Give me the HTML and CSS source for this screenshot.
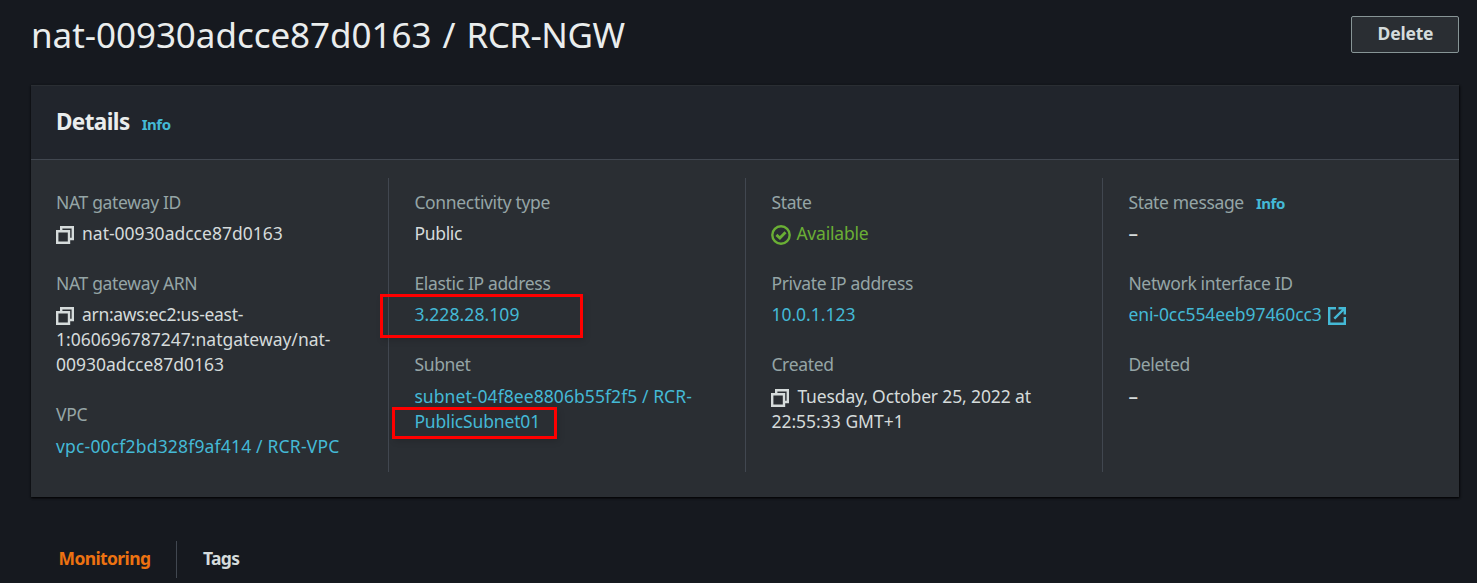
FILE: index.html
```
<!DOCTYPE html>
<html lang="en">
<head>
<meta charset="utf-8">
<title>NAT gateway details</title>
<link rel="stylesheet" href="styles.css">
</head>
<body>
<svg class="defs" aria-hidden="true">
  <symbol id="copy" viewBox="0 0 18 18"><path d="M1.2 5.2H13V16.8H1.2zM5.2 5V1.2H16.8V13H13.2" fill="none" stroke="currentColor" stroke-width="2.4"/></symbol>
</svg>
<header class="page-header">
  <h1 class="title">nat-00930adcce87d0163 / <span class="name">RCR-NGW</span></h1>
  <button class="button">Delete</button>
</header>
<main class="card">
  <div class="card-header">
    <h2 class="card-title">Details</h2>
    <a class="info">Info</a>
  </div>
  <div class="columns">
    <section class="column">
      <div class="field">
        <div class="label">NAT gateway ID</div>
        <div class="value"><svg class="icon"><use href="#copy"/></svg>nat-00930adcce87d0163</div>
      </div>
      <div class="field">
        <div class="label">NAT gateway ARN</div>
        <div class="value"><svg class="icon"><use href="#copy"/></svg><span class="snug">arn:aws:ec2:us-east-</span><br>1:060696787247:natgateway/nat-<br>00930adcce87d0163</div>
      </div>
      <div class="field last">
        <div class="label">VPC</div>
        <div class="value link wide">vpc-00cf2bd328f9af414 / RCR-VPC</div>
      </div>
    </section>
    <section class="column">
      <div class="field">
        <div class="label">Connectivity type</div>
        <div class="value snug">Public</div>
      </div>
      <div class="field">
        <div class="label">Elastic IP address</div>
        <div class="value link"><span class="ip">3.228.28.109</span></div>
      </div>
      <div class="field last">
        <div class="label">Subnet</div>
        <div class="value link"><span class="subnet">subnet-04f8ee8806b55f2f5 / RCR-</span><br><span class="public">PublicSubnet01</span></div>
      </div>
      <div class="mark mark-ip"></div>
      <div class="mark mark-subnet"></div>
    </section>
    <section class="column">
      <div class="field">
        <div class="label">State</div>
        <div class="value ok"><svg class="icon status" viewBox="0 0 20 20"><g fill="none" stroke="currentColor" stroke-width="2.4"><circle cx="10" cy="10" r="8.7"/><path d="M5.4 9.9L8.9 13L14.5 7.3" stroke-width="2.8"/></g></svg>Available</div>
      </div>
      <div class="field">
        <div class="label">Private IP address</div>
        <div class="value link">10.0.1.123</div>
      </div>
      <div class="field last">
        <div class="label">Created</div>
        <div class="value date"><svg class="icon"><use href="#copy"/></svg>Tuesday, October 25, 2022 at<br><span class="time">22:55:33 GMT+1</span></div>
      </div>
    </section>
    <section class="column">
      <div class="field">
        <div class="label">State message<a class="info">Info</a></div>
        <div class="value"><span class="dash">–</span></div>
      </div>
      <div class="field">
        <div class="label">Network interface ID</div>
        <div class="value link eni">eni-0cc554eeb97460cc3<svg class="icon external" viewBox="0 0 18 18"><path d="M8 1.2H1.2V16.8H16.8V10M10.5 1.2H16.8V7.5M16.5 1.5L6.3 11.7" fill="none" stroke="currentColor" stroke-width="2.4"/></svg></div>
      </div>
      <div class="field last">
        <div class="label">Deleted</div>
        <div class="value"><span class="dash">–</span></div>
      </div>
    </section>
  </div>
</main>
<nav class="tabs">
  <a class="tab active">Monitoring</a>
  <a class="tab tags">Tags</a>
</nav>
</body>
</html>
```
FILE: styles.css
```
* { box-sizing: border-box; }
body {
  margin: 0;
  height: 583px;
  overflow: hidden;
  background: #16191f;
  color: #d5dbdb;
  font: 17.5px/25px "Noto Sans", "Open Sans", sans-serif;
}
.defs { display: none; }
.page-header {
  display: flex;
  justify-content: space-between;
  align-items: flex-start;
  height: 85px;
  padding: 13px 18px 0 31px;
}
.title {
  margin: 0;
  color: #eaeded;
  font-size: 35px;
  font-weight: 400;
  line-height: 44px;
  letter-spacing: -0.05px;
  word-spacing: 2px;
}
.name { letter-spacing: -0.5px; }
.button {
  width: 108px;
  height: 37px;
  margin-top: 3px;
  padding: 0 0 3px 1px;
  border: 1px solid #879596;
  border-radius: 2px;
  background: #2a2e33;
  color: #d5dbdb;
  font: 700 17.5px/25px "Noto Sans", sans-serif;
  letter-spacing: -0.2px;
}
.card {
  height: 412px;
  margin: 0 18px 0 31px;
  background: #2a2e33;
  box-shadow: 0 1px 2px rgba(0, 0, 0, 0.8), 1px 1px 2px rgba(0, 0, 0, 0.5);
}
.card-header {
  display: flex;
  align-items: baseline;
  gap: 12px;
  height: 75px;
  padding: 21px 25px 0;
  border-top: 1px solid #2a2e33;
  border-bottom: 1px solid #414750;
  background: #21252c;
}
.card-title {
  margin: 0;
  color: #eaeded;
  font-size: 22.5px;
  line-height: 30px;
  letter-spacing: -0.6px;
}
.info {
  color: #44b9d6;
  font-size: 15px;
  font-weight: 700;
  line-height: 1;
  letter-spacing: -0.45px;
}
.columns {
  display: grid;
  grid-template-columns: repeat(4, 357px);
  height: 312px;
  padding-top: 18px;
}
.column {
  position: relative;
  display: flex;
  flex-direction: column;
  gap: 25px;
  height: 294px;
  padding: 12px 0 0 25px;
  white-space: nowrap;
}
.column + .column {
  padding-left: 25.4px;
  border-left: 1px solid #414750;
}
.label {
  margin-bottom: 6px;
  color: #95a5a6;
  letter-spacing: -0.34px;
}
.last .label { margin-bottom: 7px; }
.label .info { margin-left: 12px; }
.link { color: #44b9d6; }
.ok { color: #6aaf35; letter-spacing: -0.2px; }
.snug { letter-spacing: -0.3px; }
.public { letter-spacing: -0.15px; }
.subnet { letter-spacing: 0.07px; }
.wide { letter-spacing: 0.18px; }
.date { letter-spacing: -0.14px; }
.time { letter-spacing: 0; }
.eni { letter-spacing: -0.08px; }
.ip { letter-spacing: 0.08px; }
.dash { font-size: 19px; line-height: 1; font-weight: 500; }
.icon {
  width: 18px;
  height: 18px;
  margin-right: 8px;
  vertical-align: -4px;
}
.status {
  width: 20px;
  height: 20px;
  margin-right: 5px;
  vertical-align: -5px;
}
.external { margin: 0 0 0 6px; }
.mark {
  position: absolute;
  border: 3px solid #f00;
  box-shadow: 2px 3px 6px rgba(0, 0, 0, 0.12);
}
.mark-ip { left: -9px; top: 116px; width: 203px; height: 44px; }
.mark-subnet { left: 3px; top: 229px; width: 165px; height: 32px; }
.tabs {
  display: flex;
  margin: 44px 0 0 33px;
}
.tab {
  height: 37px;
  padding: 5px 26px 0 25.5px;
  font-weight: 700;
  letter-spacing: -0.62px;
}
.active { color: #ec7211; }
.tags { border-left: 1px solid #414750; }
```
